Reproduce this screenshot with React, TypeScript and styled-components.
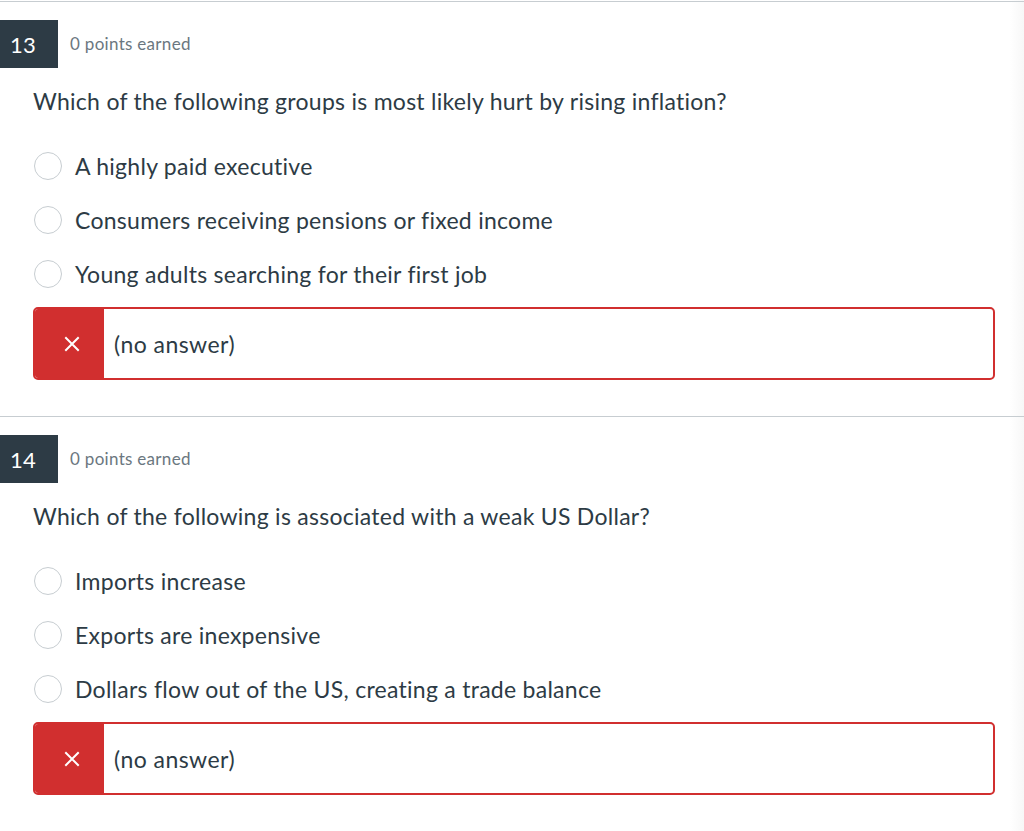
import React from "react";
import styled, { createGlobalStyle } from "styled-components";

const GlobalStyle = createGlobalStyle`
  html, body {
    margin: 0;
    padding: 0;
  }
  body {
    font-family: Lato, "Open Sans", "Liberation Sans", sans-serif;
    color: #2d3b45;
    background: linear-gradient(to right, #ffffff calc(100% - 14px), #f7f7f7 100%);
  }
`;

const Page = styled.div`
  display: flex;
  flex-direction: column;
  padding-top: 1px;
  min-height: 830px;
`;

const Question = styled.section`
  border-top: 1px solid #c7cdd1;
  padding-bottom: 36px;
`;

const Header = styled.div`
  display: flex;
  align-items: center;
  gap: 12px;
  margin-top: 18px;
`;

const Badge = styled.div`
  width: 58px;
  height: 48px;
  box-sizing: border-box;
  background: #2d3b45;
  color: #ffffff;
  font-size: 22px;
  letter-spacing: 0.3px;
  display: flex;
  align-items: center;
  padding-left: 10px;
`;

const Points = styled.span`
  font-size: 17px;
  letter-spacing: 0.3px;
  color: #6b7780;
  margin-top: -1px;
`;

const Prompt = styled.p`
  margin: 18px 0 0;
  padding-left: 33px;
  font-size: 23px;
  letter-spacing: 0.27px;
  line-height: 31px;
  color: #2d3b45;
`;

const Answers = styled.ul`
  list-style: none;
  margin: 22px 0 0;
  padding: 0 0 0 34px;
  display: flex;
  flex-direction: column;
`;

const AnswerRow = styled.li`
  height: 54px;
  display: flex;
  align-items: center;
  gap: 13px;
  font-size: 23px;
  letter-spacing: 0.27px;
  color: #2d3b45;
`;

const Radio = styled.span`
  width: 28px;
  height: 28px;
  box-sizing: border-box;
  border-radius: 50%;
  border: 1px solid #c7cdd1;
  background: #ffffff;
  flex: none;
`;

const ResultBox = styled.div`
  margin: 6px 29px 0 33px;
  height: 73px;
  box-sizing: border-box;
  border: 2px solid #d12f2f;
  border-radius: 5px;
  display: flex;
  align-items: stretch;
  overflow: hidden;
`;

const ResultMark = styled.div`
  width: 69px;
  background: #d12f2f;
  display: flex;
  align-items: center;
  justify-content: center;
  padding-left: 4px;
  box-sizing: border-box;
`;

const ResultText = styled.div`
  display: flex;
  align-items: center;
  padding-left: 10px;
  font-size: 23px;
  letter-spacing: 0.45px;
  color: #2d3b45;
`;

const Cross = () => (
  <svg width="16" height="16" viewBox="0 0 16 16" aria-hidden="true">
    <path d="M2 2 L14 14 M14 2 L2 14" stroke="#ffffff" strokeWidth="2" strokeLinecap="square" fill="none" />
  </svg>
);

type Q = { num: number; prompt: string; answers: string[] };

const questions: Q[] = [
  {
    num: 13,
    prompt: "Which of the following groups is most likely hurt by rising inflation?",
    answers: [
      "A highly paid executive",
      "Consumers receiving pensions or fixed income",
      "Young adults searching for their first job",
    ],
  },
  {
    num: 14,
    prompt: "Which of the following is associated with a weak US Dollar?",
    answers: [
      "Imports increase",
      "Exports are inexpensive",
      "Dollars flow out of the US, creating a trade balance",
    ],
  },
];

export default function App() {
  return (
    <>
      <GlobalStyle />
      <Page>
        {questions.map((q) => (
          <Question key={q.num}>
            <Header>
              <Badge>{q.num}</Badge>
              <Points>0 points earned</Points>
            </Header>
            <Prompt>{q.prompt}</Prompt>
            <Answers>
              {q.answers.map((a) => (
                <AnswerRow key={a}>
                  <Radio />
                  {a}
                </AnswerRow>
              ))}
            </Answers>
            <ResultBox>
              <ResultMark>
                <Cross />
              </ResultMark>
              <ResultText>(no answer)</ResultText>
            </ResultBox>
          </Question>
        ))}
      </Page>
    </>
  );
}
